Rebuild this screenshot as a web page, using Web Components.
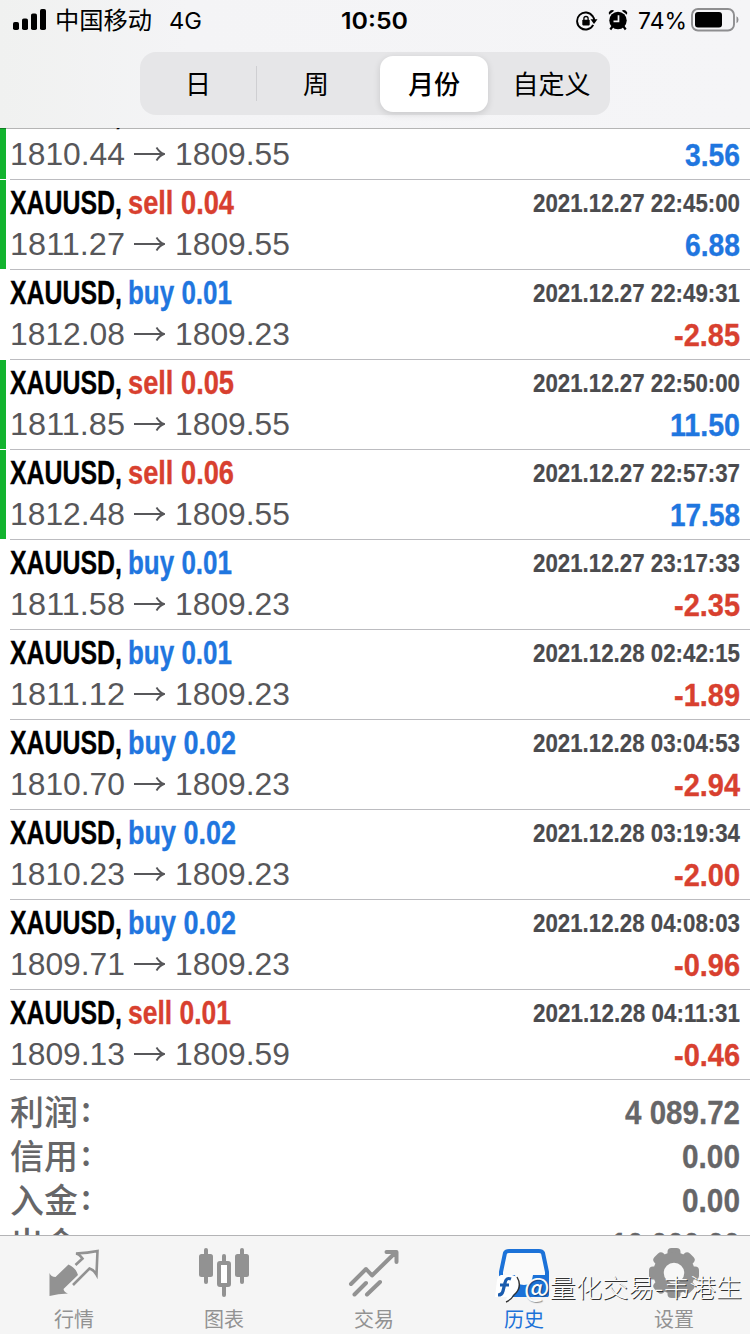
<!DOCTYPE html>
<html lang="zh-CN">
<head>
<meta charset="utf-8">
<title>历史</title>
<style>
html,body{margin:0;padding:0;background:#fff}
body{width:750px;height:1334px;overflow:hidden;font-family:"Liberation Sans","Noto Sans CJK SC",sans-serif}
</style>
</head>
<body>
<history-app></history-app>
<script>
// Text squeezed or stretched horizontally to an exact width
class FitText extends HTMLElement{
  connectedCallback(){
    if(this.shadowRoot)return;
    const w=+this.getAttribute('w');
    this.attachShadow({mode:'open'}).innerHTML=`<style>:host{display:inline-block;width:${w}px;white-space:pre}span{display:inline-block;transform-origin:0 50%}</style><span><slot></slot></span>`;
    const s=this.shadowRoot.querySelector('span');
    const n=s.getBoundingClientRect().width;
    if(n)s.style.transform=`scaleX(${w/n})`;
  }
}
class StatusBar extends HTMLElement{
  constructor(){super();this.attachShadow({mode:'open'}).innerHTML=`
<style>
:host{display:flex;align-items:center;height:41px;padding:0 11px 0 13px;box-sizing:border-box;color:#000;font-family:Inter,"Noto Sans CJK SC",sans-serif;font-size:23px;line-height:40px}
.l,.r{flex:1;display:flex;align-items:center}
.r{justify-content:flex-end}
svg{display:block;flex:none}
.t{font-weight:600;font-size:23px;margin-right:4px}
</style>
<div class="l"><svg width="34" height="22" viewBox="0 0 34 22" style="margin:-1px 8px 0 0"><rect x="0" y="13" width="6" height="8" rx="1.8"/><rect x="9" y="9.500" width="6" height="11.500" rx="1.800"/><rect x="18" y="4.500" width="6" height="16.500" rx="1.800"/><rect x="27" y="0" width="6" height="21" rx="1.800"/></svg><fit-text w="97" style="font-size:24px">中国移动</fit-text><fit-text w="33" style="margin-left:17px">4G</fit-text></div>
<fit-text class="t" w="67">10:50</fit-text>
<div class="r">
<svg width="22" height="20" viewBox="0 0 22 20" style="margin-right:10px"><path d="M16.600 5.200A8.500 8.500 0 1 0 17.200 13.800" fill="none" stroke="#000" stroke-width="1.900"/><path d="M14.500 8.200h7l-3.500 4.800z"/><path d="M16.400 4.900q1.800 2 1.800 4.600" fill="none" stroke="#000" stroke-width="1.900"/><rect x="6.300" y="8.800" width="7.400" height="5.600" rx=".8"/><path d="M7.900 9V7.600a2.100 2.100 0 0 1 4.200 0V9" fill="none" stroke="#000" stroke-width="1.300"/></svg>
<svg width="20" height="22" viewBox="0 0 20 22" style="margin:-2px 10px 0 0"><circle cx="10" cy="11.500" r="8.700"/><path d="M1 5.800a3.400 3.400 0 0 1 5.200-4zM19 5.800a3.400 3.400 0 0 0-5.200-4z"/><path d="M4.500 17.500 2.300 20.500M15.500 17.500l2.200 3" stroke="#000" stroke-width="2.200"/><path d="M10.500 6.300v6H5.500" fill="none" stroke="#f5f5f7" stroke-width="1.700"/></svg>
<fit-text w="49">74%</fit-text>
<svg width="48" height="24" viewBox="0 0 48 24" style="margin:-1px 0 0 4px"><rect x="1" y="1" width="42" height="21.500" rx="6" fill="none" stroke="#8e8e90" stroke-width="1.900"/><rect x="4" y="4" width="27" height="15.500" rx="3" fill="#000"/><path d="M45.500 8.300q2 .8 2 3.500t-2 3.500z" fill="#8e8e90"/></svg>
</div>`}
}
class SegmentedControl extends HTMLElement{
  constructor(){super();this.attachShadow({mode:'open'}).innerHTML=`
<style>
:host{display:grid;grid-template-columns:117px 118px 118px 117px;width:470px;height:63px;margin:11px 0 0 140px;border-radius:16px;background:#e6e6e8;font:400 26px/65px Inter,"Noto Sans CJK SC",sans-serif;text-align:center;color:#000}
.a{border-right:1.500px solid #cfcfd2;height:35px;margin:14px 0;line-height:37px}
.s{background:#fff;border-radius:13px;margin:4px 5px;height:56px;line-height:57px;font-weight:500;box-shadow:0 2px 7px #00000022}
</style><div class="a">日</div><div>周</div><div class="s">月份</div><div>自定义</div>`}
}
class DealRow extends HTMLElement{
  connectedCallback(){
    const g=k=>this.getAttribute(k);
    const side=g('side'),p=g('profit'),neg=p[0]==='-';
    const pw=neg?66:(p.length>4?70:55);
    const sw=!side?0:side.startsWith('sell')?(side.endsWith('1')?103:106):(side.endsWith('1')?104:108);
    this.attachShadow({mode:'open'}).innerHTML=`
<style>
:host{display:block;height:90px;position:relative;box-sizing:border-box;flex:none}
.mark{position:absolute;left:0;top:0;width:6px;height:89px;background:#13b32f}
.body{margin-left:10px;height:90px;border-bottom:1px solid #bcbcc0;padding:1px 10px 0 0;box-sizing:border-box}
.line{display:flex;justify-content:space-between;height:44px;line-height:44px}
.two{height:40px;line-height:37px}
.sym,.side,.date,.profit{font-family:"Liberation Sans Narrow","Liberation Sans",sans-serif;font-weight:700;-webkit-text-stroke:.35px currentColor}
.sym,.side{font-size:33px}.sym{color:#000}.side{margin-left:6px}
.date{font-size:26px;color:#4b4b4e;-webkit-text-stroke-width:.2px}
.price{font-size:32px;color:#57575a;display:flex;align-items:center;height:38px}
.price svg{margin:0 10px 0 9px;display:block}
.profit{font-size:32px;line-height:40px}
.red{color:#d8402f}.blue{color:#1f76df}
</style>
${g('mark')!==null?'<div class="mark"></div>':''}
<div class="body"><div class="line"><div><fit-text class="sym" w="112">XAUUSD,</fit-text>${side?`<fit-text class="side ${side.startsWith('sell')?'red':'blue'}" w="${sw}">${side}</fit-text>`:''}</div>${g('date')?`<fit-text class="date" w="207">${g('date')}</fit-text>`:''}</div>
<div class="line two"><div class="price"><fit-text w="115">${g('open')}</fit-text><svg width="31" height="16" viewBox="0 0 31 16"><path d="M0 8H29.500M22.500 1.500Q25.500 6.500 30 8Q25.500 9.500 22.500 14.500" fill="none" stroke="#57575a" stroke-width="1.900"/></svg><fit-text w="115">${g('close')}</fit-text></div><fit-text class="profit ${neg?'red':'blue'}" w="${pw}">${p}</fit-text></div></div>`}
}
class SummaryRow extends HTMLElement{
  connectedCallback(){
    const v=this.getAttribute('value');
    this.attachShadow({mode:'open'}).innerHTML=`
<style>:host{display:flex;justify-content:space-between;height:44px;line-height:44px;padding:0 10px;color:#666668;flex:none}
.k{display:flex;font:500 34px/42px "Noto Sans CJK SC",sans-serif}
.c{margin-left:3px;line-height:35px}
.v{font:700 34px/44px "Liberation Sans Narrow","Liberation Sans",sans-serif;-webkit-text-stroke:.3px currentColor}</style>
<div class="k"><fit-text w="68">${this.getAttribute('label')}</fit-text><span class="c">:</span></div><fit-text class="v" w="${this.getAttribute('vw')}">${v}</fit-text>`}
}
class TabItem extends HTMLElement{
  constructor(){super();this.attachShadow({mode:'open'}).innerHTML=`
<style>:host{display:flex;flex-direction:column;align-items:center;width:150px;color:#929292;font:400 20px/29px "Noto Sans CJK SC",sans-serif}
:host([active]){color:#1c72d8}
.i{height:56px;padding-top:12px;box-sizing:content-box}</style><div class="i"><slot name="icon"></slot></div><div><slot></slot></div>`}
}
class TabBar extends HTMLElement{
  constructor(){super();
    let teeth='';for(let i=0;i<8;i++)teeth+=`<rect x="-6.500" y="-25" width="13" height="12" rx="4" transform="translate(25 25) rotate(${i*45})"/>`;
    this.attachShadow({mode:'open'}).innerHTML=`
<style>:host{display:flex;position:relative;height:98px;margin-left:-1px;border-top:1px solid #b4b4b6;background:#f5f5f5;flex:none;width:751px}
svg{display:block}
.wm{position:absolute;left:496px;top:31px;display:flex;align-items:center;color:#fafafa;white-space:nowrap;font:300 25px/38px "Noto Sans CJK SC",sans-serif;text-shadow:1px 1px 0 #333}
.at{font-weight:500;text-shadow:1px 1px 1px #0006}
</style>
<tab-item><svg slot="icon" width="52" height="50" viewBox="0 0 52 50"><path d="M1.500 25Q3 29 7.500 29L20.500 16.500Q28 20 30 27L15.500 41Q16 44 20 45.500Q10 45.500 1.500 48Z" fill="#929292"/><path d="M27.500 17 34.500 10.500Q31 6 28 5.500Q40 5 49.500 3L48.500 26.500Q46 22 41.500 20.500L25 37" fill="none" stroke="#929292" stroke-width="2.600"/></svg>行情</tab-item>
<tab-item><svg slot="icon" width="52" height="50" viewBox="0 0 52 50" fill="#929292"><rect x="6" y="0" width="4" height="36" rx="2"/><rect x="1" y="6" width="14" height="23" rx="2.500"/><rect x="42" y="0" width="4" height="36" rx="2"/><rect x="37" y="6" width="14" height="23" rx="2.500"/><rect x="24" y="6" width="4" height="10" rx="2"/><rect x="24" y="36" width="4" height="13" rx="2"/><rect x="21" y="15" width="10" height="22" rx="1" fill="#fff" stroke="#929292" stroke-width="4"/></svg>图表</tab-item>
<tab-item><svg slot="icon" width="52" height="50" viewBox="0 0 52 50" fill="none" stroke="#929292" stroke-width="4" stroke-linecap="round" stroke-linejoin="round"><path d="M3 36 18 21 24 27.500 48 4M38.500 4H48.500V14M6.500 46.500 18 35M19 46.500 32 34"/></svg>交易</tab-item>
<tab-item active><svg slot="icon" width="52" height="50" viewBox="0 0 52 50"><path d="M7 5Q8 3 11 3H41Q44 3 45 5L49 24V47H3V24Z" fill="#fafafa" stroke="#1c72d8" stroke-width="4" stroke-linejoin="round"/><path d="M2 27H17Q18 37 26 37T35 27H50V49H2Z" fill="#1c72d8"/></svg>历史</tab-item>
<tab-item><svg slot="icon" width="50" height="50" viewBox="0 0 50 50" fill="#929292">${teeth}<circle cx="25" cy="25" r="15.500" fill="#f7f7f7" stroke="#929292" stroke-width="10.500"/></svg>设置</tab-item>
<div class="wm"><svg width="29" height="34" viewBox="0 0 29 34"><path d="M6 6H17Q24 7 24 14Q24 23 18 26Q16 31 10 33L12 28H0L2 11Q3 7 6 6Z" fill="#fff"/><path d="M16 10Q11 8 10 14L8 22Q7 26 3 26M5 16H14" fill="none" stroke="#1a5cae" stroke-width="3.200"/><path d="M22 8Q28 18 19 26Q16 31 11 33" fill="none" stroke="#333" stroke-width="1.400"/></svg><fit-text w="218"><span class="at">@</span>量化交易-韦港生</fit-text></div>`;
    this.shadowRoot.querySelector('.at').style.cssText='font-weight:500';
  }
}
class HistoryApp extends HTMLElement{
  constructor(){super();
    const rows=[['sell 0.04','2021.12.27 22:45:00','1811.27','1809.55','6.88',1],['buy 0.01','2021.12.27 22:49:31','1812.08','1809.23','-2.85'],['sell 0.05','2021.12.27 22:50:00','1811.85','1809.55','11.50',1],['sell 0.06','2021.12.27 22:57:37','1812.48','1809.55','17.58',1],['buy 0.01','2021.12.27 23:17:33','1811.58','1809.23','-2.35'],['buy 0.01','2021.12.28 02:42:15','1811.12','1809.23','-1.89'],['buy 0.02','2021.12.28 03:04:53','1810.70','1809.23','-2.94'],['buy 0.02','2021.12.28 03:19:34','1810.23','1809.23','-2.00'],['buy 0.02','2021.12.28 04:08:03','1809.71','1809.23','-0.96'],['sell 0.01','2021.12.28 04:11:31','1809.13','1809.59','-0.46']];
    this.attachShadow({mode:'open'}).innerHTML=`
<style>
:host{display:flex;flex-direction:column;width:750px;height:1334px;overflow:hidden;background:#fff}
header{position:relative;z-index:1;height:128px;flex:none;background:linear-gradient(90deg,#f0f1f0,#f4f4f6 25%,#f5f5f7) padding-box;border-bottom:1px solid #0000004a;box-sizing:content-box}
main{flex:1;min-height:0;overflow:hidden;display:flex;flex-direction:column;margin-top:-1px}
.first{margin-top:-38px}
.sum{padding-top:10px}
</style>
<header><status-bar></status-bar><segmented-control></segmented-control></header>
<main><deal-row class="first" mark open="1810.44" close="1809.55" profit="3.56"></deal-row>
${rows.map(r=>`<deal-row side="${r[0]}" date="${r[1]}" open="${r[2]}" close="${r[3]}" profit="${r[4]}" ${r[5]?'mark':''}></deal-row>`).join('')}
<div class="sum"><summary-row label="利润" value="4 089.72" vw="115"></summary-row><summary-row label="信用" value="0.00" vw="58"></summary-row><summary-row label="入金" value="0.00" vw="58"></summary-row><summary-row label="出金" value="10 000.00" vw="129"></summary-row></div></main>
<tab-bar></tab-bar>`}
}
for(const [n,c] of [['fit-text',FitText],['status-bar',StatusBar],['segmented-control',SegmentedControl],['deal-row',DealRow],['summary-row',SummaryRow],['tab-item',TabItem],['tab-bar',TabBar],['history-app',HistoryApp]])customElements.define(n,c);
</script>
</body>
</html>
